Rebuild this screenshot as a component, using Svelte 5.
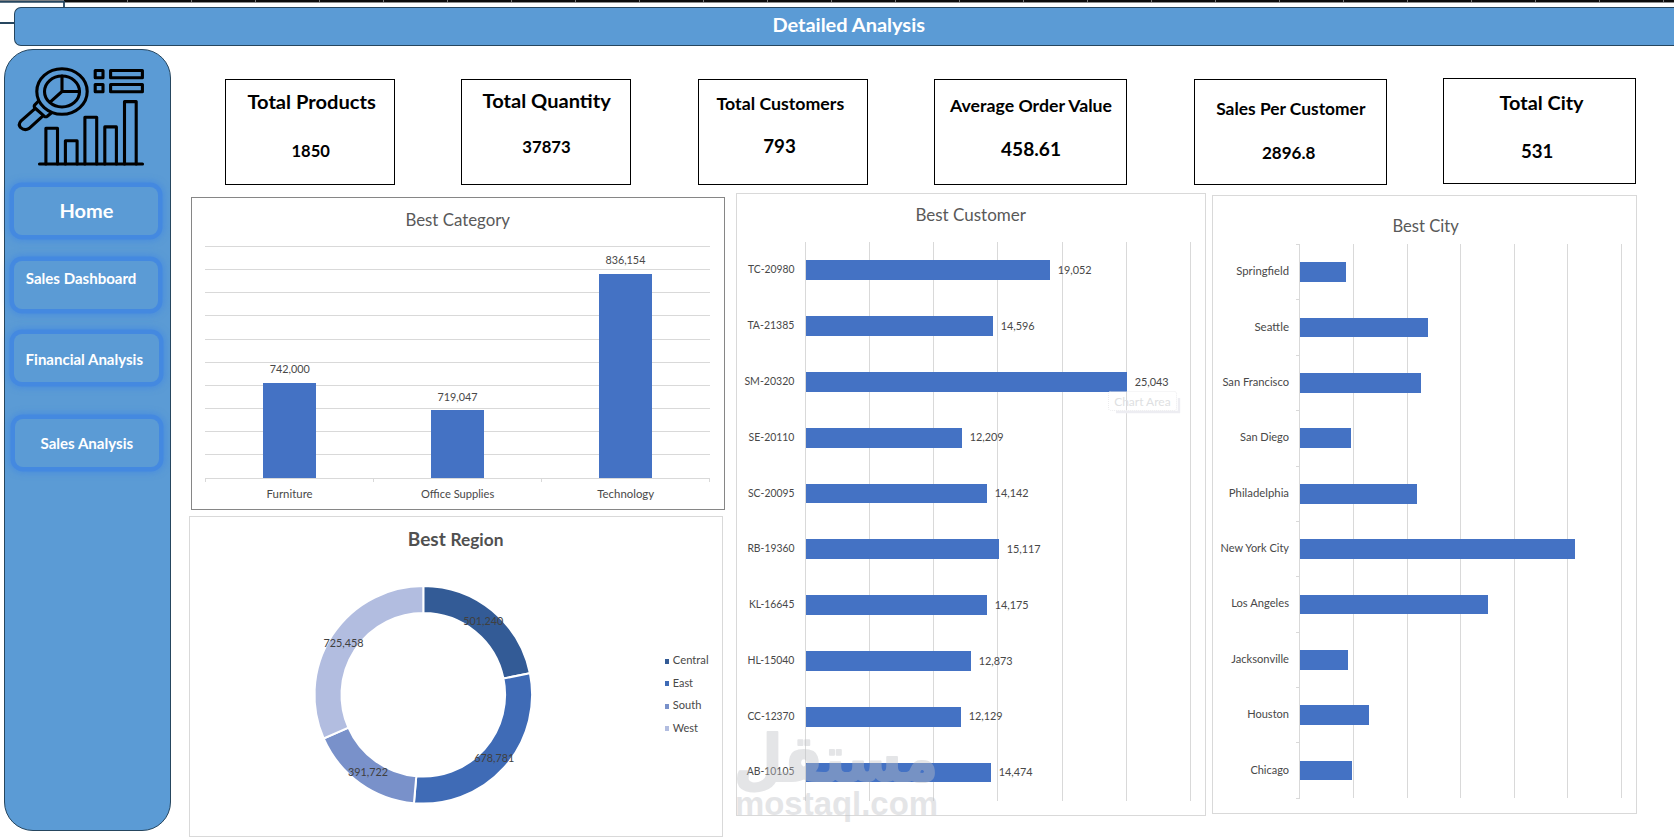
<script>
  const topTicks = Array.from({ length: 25 }, (_, i) => 127 + 64 * i);

  const nav = [
    { text: 'Home', x: 14, y: 187, w: 144, tx: 59.5, ty: 218.4, tw: 54, size: 19 },
    { text: 'Sales Dashboard', x: 14, y: 261, w: 144, tx: 25.8, ty: 283.8, tw: 110.6, size: 15 },
    { text: 'Financial Analysis', x: 14, y: 334, w: 145, tx: 25.6, ty: 364.8, tw: 117.4, size: 15 },
    { text: 'Sales Analysis', x: 15, y: 419, w: 144, tx: 40.5, ty: 448.8, tw: 92.6, size: 15 }
  ];

  const cards = [
    { x: 225, y: 79, w: 170, title: ['Total Products', 247.4, 108.5, 128.4, 18.4], value: ['1850', 291.5, 157.3, 38.4, 17] },
    { x: 461, y: 79, w: 170, title: ['Total Quantity', 482.6, 107.6, 128.2, 18.4], value: ['37873', 522.3, 153.3, 48.4, 17] },
    { x: 698, y: 79, w: 170, title: ['Total Customers', 716.6, 109.7, 127.6, 16.8], value: ['793', 763.2, 153, 32.6, 18] },
    { x: 934, y: 79, w: 193, title: ['Average Order Value', 950, 111.6, 162, 16.8], value: ['458.61', 1001, 156, 60, 18] },
    { x: 1194, y: 79, w: 193, title: ['Sales Per Customer', 1216.2, 115.3, 149.2, 16.8], value: ['2896.8', 1262, 159.3, 53.4, 16.8] },
    { x: 1443, y: 78, w: 193, title: ['Total City', 1499.6, 110, 84, 18.4], value: ['531', 1521, 158, 32.4, 18] }
  ];

  const gridY = [246, 269, 292, 315, 339, 362, 385, 408, 431, 454, 478];
  const categories = [
    { x: 263, w: 53, top: 383, value: ['742,000', 269.7, 373.3, 40], name: ['Furniture', 266.6, 497.5, 46] },
    { x: 431, w: 53, top: 410, value: ['719,047', 437.6, 400.5, 40], name: ['Office Supplies', 421, 497.5, 73.2] },
    { x: 599, w: 53, top: 274, value: ['836,154', 605.4, 264.4, 40], name: ['Technology', 597.2, 497.5, 57] }
  ];

  const cx = 423.3, cy = 694.8, R = 108.8, r = 81.8;
  const regions = [
    { name: 'Central', value: 501240, color: '#335b96', lx: 463.3, ly: 625, sy: 659, ty: 664.2, tw: 35.8 },
    { name: 'East', value: 678781, color: '#3f6bb6', lx: 474.3, ly: 762, sy: 681, ty: 687.2, tw: 20.2 },
    { name: 'South', value: 391722, color: '#7991ca', lx: 348, ly: 776, sy: 704, ty: 709.2, tw: 28.6 },
    { name: 'West', value: 725458, color: '#b2bde0', lx: 323.6, ly: 647, sy: 726, ty: 732.2, tw: 25.2 }
  ];
  const total = regions.reduce((s, d) => s + d.value, 0);
  const point = (f, rad) => {
    const a = f * 2 * Math.PI;
    return `${(cx + rad * Math.sin(a)).toFixed(2)} ${(cy - rad * Math.cos(a)).toFixed(2)}`;
  };
  let acc = 0;
  const arcs = regions.map((d) => {
    const a = acc / total;
    acc += d.value;
    const b = acc / total;
    return {
      ...d,
      path: `M${point(a, R)}A${R} ${R} 0 0 1 ${point(b, R)}L${point(b, r)}A${r} ${r} 0 0 0 ${point(a, r)}Z`
    };
  });

  const custGrid = [805, 869, 933, 997, 1062, 1126, 1190];
  const customers = [
    ['TC-20980', 748, 273, 1050, 260, 20, '19,052', 274],
    ['TA-21385', 747.4, 329, 993, 316, 20, '14,596', 330],
    ['SM-20320', 744.4, 385, 1127, 372, 20, '25,043', 386],
    ['SE-20110', 748.6, 441, 962, 428, 20, '12,209', 441],
    ['SC-20095', 748, 497, 987, 484, 19, '14,142', 497],
    ['RB-19360', 747.4, 552, 999, 539, 20, '15,117', 553],
    ['KL-16645', 749, 608, 987, 595, 20, '14,175', 609],
    ['HL-15040', 747.6, 664, 971, 651, 20, '12,873', 665],
    ['CC-12370', 747.4, 720, 961, 707, 20, '12,129', 720],
    ['AB-10105', 746.8, 775, 991, 763, 19, '14,474', 776]
  ];

  const cityGrid = [1299, 1353, 1407, 1460, 1514, 1567, 1621];
  const cityTicks = [244, 299, 355, 410, 466, 521, 576, 632, 687, 742, 798];
  const cities = [
    ['Springfield', 1236.3, 275, 1346, 262, 20],
    ['Seattle', 1254.4, 331, 1428, 318, 19],
    ['San Francisco', 1222.4, 386, 1421, 373, 20],
    ['San Diego', 1240, 441, 1351, 428, 20],
    ['Philadelphia', 1228.8, 497, 1417, 484, 20],
    ['New York City', 1220.6, 552, 1575, 539, 20],
    ['Los Angeles', 1231.2, 607, 1488, 595, 19],
    ['Jacksonville', 1231.2, 663, 1348, 650, 20],
    ['Houston', 1247.2, 718, 1369, 705, 20],
    ['Chicago', 1250.4, 774, 1352, 761, 19]
  ];
</script>

{#snippet label(text, x, y, width, size, cls)}
  <text class={cls} {x} {y} font-size={size} textLength={width} lengthAdjust="spacingAndGlyphs">{text}</text>
{/snippet}

{#snippet entry([text, x, y, width, size = 11.6], cls)}
  {@render label(text, x, y, width, size, cls)}
{/snippet}

<div class="page">
  <svg class="strip" width="1674" height="7" viewBox="0 0 1674 7">
    <rect x="64" width="1610" height="2" fill="#0c0c0c" />
    <rect x="64" y="2" width="1610" height="1" fill="#8d8d8d" />
    {#each topTicks as x}<rect {x} width="1" height="2" fill="#777" />{/each}
    <rect width="64" height="1" fill="#7c8084" />
    <path d="M0 1.9H64V7" fill="none" stroke="#26465f" stroke-width="1.8" />
  </svg>

  <header class="banner">
    <svg class="stub" width="14" height="2" viewBox="0 0 14 2"><rect width="14" height="2" fill="#26465f" /></svg>
    <div class="bar">
      <svg width="1659" height="37" viewBox="15 8 1659 37">
        {@render label('Detailed Analysis', 772.4, 31.8, 152.6, 19, 'white')}
      </svg>
    </div>
  </header>

  <div class="body">
    <aside class="sidebar">
      <svg class="logo" width="165" height="137" viewBox="5 50 165 137">
        <g fill="none" stroke="#000" stroke-width="3.1" stroke-linejoin="round" stroke-linecap="round">
          <ellipse cx="62" cy="91.5" rx="25.2" ry="22.8" />
          <ellipse cx="62" cy="91.5" rx="17.5" ry="15.5" />
          <path d="M62 76V91.5H79.5M62 91.5L50.4 101.8" />
          <path d="M38.3 101.2L34.6 105.1Q33.7 106.7 35 108L44.2 116.2Q45.8 117.3 47.3 116.2L51 113.2" />
          <path d="M35 108.7L20.8 121.2Q17.9 124.5 20.7 127.6Q24.7 131.2 29.2 128.4L42.7 116.1" />
          <rect x="95.2" y="70.5" width="7.8" height="7.2" />
          <rect x="95.2" y="84.5" width="7.8" height="7.2" />
          <rect x="110.6" y="70.5" width="31.8" height="7.2" />
          <rect x="110.6" y="84.5" width="31.8" height="7.2" />
          <path d="M39.5 164H142.5" />
          <path d="M45.9 164V128.2H57.5V164M65.4 164V140.7H77.1V164M84.9 164V117.2H96.7V164M104.8 164V126.9H116.4V164M124.5 164V101.6H136.2V164" />
        </g>
      </svg>
      {#each nav as item, i}
        <a
          class="nav"
          href="#{i}"
          style:width="{item.w}px"
          style:margin-left="{item.x - 5}px"
          style:margin-top="{i === 0 ? 0 : item.y - nav[i - 1].y - 48}px"
        >
          <svg width={item.w} height="48" viewBox="{item.x} {item.y} {item.w} 48">
            {@render label(item.text, item.tx, item.ty, item.tw, item.size, 'white')}
          </svg>
        </a>
      {/each}
    </aside>

    <main>
      <section class="cards">
        {#each cards as c, i}
          <article
            class="card"
            style:width="{c.w}px"
            style:margin-left="{i === 0 ? 0 : c.x - cards[i - 1].x - cards[i - 1].w}px"
            style:margin-top="{c.y - 78}px"
          >
            <svg width={c.w - 2} height="104" viewBox="{c.x + 1} {c.y + 1} {c.w - 2} 104">
              {@render entry(c.title, 'black')}
              {@render entry(c.value, 'black')}
            </svg>
          </article>
        {/each}
      </section>

      <section class="charts">
        <div class="left">
          <div class="panel category">
            <svg width="532" height="311" viewBox="192 198 532 311">
              {@render label('Best Category', 405.4, 225.5, 104.6, 17.4, 'title')}
              {#each gridY as y}<rect class="grid" x="205" {y} width="505" height="1" />{/each}
              {#each [205, 373, 541, 709] as x}<rect class="grid" {x} y="478" width="1" height="4" />{/each}
              {#each categories as c}
                <rect class="fill" x={c.x} y={c.top} width={c.w} height={478 - c.top} />
                {@render entry(c.value, 'small')}
                {@render entry(c.name, 'small')}
              {/each}
            </svg>
          </div>
          <div class="panel region">
            <svg width="532" height="319" viewBox="190 517 532 319">
              {@render label('Best', 407.8, 546.3, 38, 18.2, 'title bold')}
              {@render label('Region', 450.4, 546.3, 53, 16.6, 'title bold')}
              {#each arcs as a}<path d={a.path} fill={a.color} stroke="#fff" stroke-width="2" />{/each}
              {#each arcs as a}
                {@render label(a.value.toLocaleString('en-US'), a.lx, a.ly, 40, 11.6, 'small dark')}
                <rect x="665" y={a.sy} width="4" height="5" fill={a.color} />
                {@render label(a.name, 672.8, a.ty, a.tw, 11.6, 'small')}
              {/each}
            </svg>
          </div>
        </div>

        <div class="panel customer">
          <svg width="468" height="621" viewBox="737 194 468 621">
            {@render label('Best Customer', 915.4, 221.4, 110.6, 17.4, 'title')}
            {#each custGrid as x}<rect class="grid" {x} y="242" width="1" height="559" />{/each}
            {#each customers as [name, lx, ly, end, y, h, value, vy]}
              <rect class="fill" x="806" {y} width={end - 806} height={h} />
              {@render label(name, lx, ly + 0.2, 794.4 - lx, 11.6, 'small')}
              {@render label(value, end + 7.7, vy + 0.2, 34, 11.6, 'small')}
            {/each}
            <g class="tip">
              <path d="M1116 412H1179V398" />
              <rect x="1108.5" y="391.5" width="68" height="19" rx="2" />
              {@render label('Chart Area', 1114.2, 405.5, 56.4, 11.8, 'faint')}
            </g>
          </svg>
          <svg class="watermark" width="206" height="104" viewBox="734 724 206 104">
            <text class="arabic" direction="rtl" text-anchor="start" x="938" y="781" font-size="64" textLength="204" lengthAdjust="spacingAndGlyphs">مستقل</text>
            {@render label('mostaql.com', 735, 815, 203, 33, 'latin')}
          </svg>
        </div>

        <div class="panel city">
          <svg width="423" height="617" viewBox="1213 196 423 617">
            {@render label('Best City', 1392.4, 231.6, 66.4, 17.4, 'title')}
            {#each cityGrid as x}<rect class="grid" {x} y="244" width="1" height="554" />{/each}
            {#each cityTicks as y}<rect class="grid" x="1296" {y} width="4" height="1" />{/each}
            {#each cities as [name, lx, ly, end, y, h]}
              <rect class="fill" x="1300" {y} width={end - 1300} height={h} />
              {@render label(name, lx, ly + 0.2, 1289 - lx, 11.6, 'small')}
            {/each}
          </svg>
        </div>
      </section>
    </main>
  </div>
</div>

<style>
  :global(body) { margin: 0; background: #fff; overflow: hidden; }
  .page { width: 1674px; height: 839px; overflow: hidden; background: #fff; font-family: Lato, 'Open Sans', sans-serif; }
  svg { display: block; }
  .banner { display: flex; height: 39px; }
  .stub { margin-top: 15px; flex: none; }
  .bar {
    box-sizing: border-box; width: 1660px; height: 39px; flex: none;
    background: #5b9bd5; border: 1px solid #26465f; border-right: 0; border-radius: 7px 0 0 7px;
  }
  .body { display: flex; align-items: flex-start; }
  .sidebar {
    box-sizing: border-box; width: 167px; height: 782px; flex: none; margin: 3px 0 0 4px;
    background: #5b9bd5; border: 1px solid #26465f; border-radius: 29px;
  }
  .nav {
    display: block; height: 48px; border-radius: 8px; background: #5b9bd5;
    box-shadow: 0 0 0 4.5px #4489e0, 0 0 6px 6px rgba(68, 137, 224, 0.75);
  }
  main { flex: none; margin-left: 18px; padding-top: 32px; }
  .cards { display: flex; align-items: flex-start; margin-left: 36px; height: 107px; }
  .card { box-sizing: border-box; height: 106px; flex: none; border: 1px solid #000; background: #fff; }
  .charts { display: flex; align-items: flex-start; padding-top: 8px; }
  .panel { box-sizing: border-box; border: 1px solid #d9d9d9; background: #fff; flex: none; }
  .left { display: flex; flex-direction: column; gap: 6px; padding-top: 4px; width: 536px; flex: none; }
  .category { width: 534px; height: 313px; margin-left: 2px; border-color: #868686; }
  .region { width: 534px; height: 321px; }
  .customer { position: relative; width: 470px; height: 623px; margin-left: 11px; }
  .city { width: 425px; height: 619px; margin: 2px 0 0 6px; }
  .watermark { position: absolute; left: -3px; top: 530px; opacity: 0.41; overflow: visible; }
  .grid { fill: #d9d9d9; }
  .fill { fill: #4472c4; }
  .white { fill: #fff; font-weight: 700; }
  .black { fill: #000; font-weight: 700; }
  .title { fill: #595959; }
  .bold { font-weight: 700; fill: #505050; }
  .small { fill: #484848; }
  .dark { fill: #404040; }
  .faint { fill: #dedfe2; }
  .tip rect { fill: none; stroke: #ececee; stroke-dasharray: 1 1; }
  .tip path { fill: none; stroke: #ededf2; stroke-width: 2.4; }
  .arabic {
    fill: #bfc1c6; stroke: #bfc1c6; stroke-width: 2.2; stroke-linejoin: round;
    font-family: 'DejaVu Sans', sans-serif; font-weight: 700;
  }
  .latin { fill: #bfc1c6; font-family: 'Liberation Sans', sans-serif; font-weight: 700; }
</style>
